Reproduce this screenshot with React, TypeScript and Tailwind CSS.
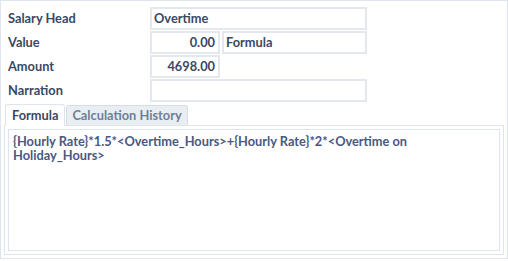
export default function App() {
  const rows = [
    { label: 'Salary Head' },
    { label: 'Value' },
    { label: 'Amount' },
    { label: 'Narration' },
  ];

  return (
    <div
      className="w-[508px] h-[259px] border border-[#dfe5ec] bg-white px-[3px] pt-[6px] text-[12.8px] text-[#3a4864]"
      style={{ fontFamily: 'Lato, "Noto Sans", sans-serif' }}
    >
      {/* Form */}
      <div className="flex flex-col gap-px pl-[4px]">
        <div className="flex h-[23px] items-center">
          <div className="w-[142px] font-bold">{rows[0].label}</div>
          <div className="flex h-[23px] w-[217px] items-center border-2 border-[#e3e8ee] px-[2px] font-bold">Overtime</div>
        </div>
        <div className="flex h-[23px] items-center">
          <div className="w-[142px] font-bold">{rows[1].label}</div>
          <div className="flex h-[23px] w-[70px] items-center justify-end border-2 border-[#e3e8ee] px-[3px] font-bold">0.00</div>
          <div className="ml-[2px] flex h-[23px] w-[145px] items-center border-2 border-[#e3e8ee] px-[2px] font-bold">Formula</div>
        </div>
        <div className="flex h-[23px] items-center">
          <div className="w-[142px] font-bold">{rows[2].label}</div>
          <div className="flex h-[23px] w-[70px] items-center justify-end border-2 border-[#e3e8ee] px-[3px] font-bold">4698.00</div>
        </div>
        <div className="flex h-[23px] items-center">
          <div className="w-[142px] font-bold">{rows[3].label}</div>
          <div className="h-[23px] w-[217px] border-2 border-[#e3e8ee]"></div>
        </div>
      </div>

      {/* Tabs */}
      <div className="mt-[2px]">
        <div className="flex items-end pl-[1px]">
          <div className="relative z-10 -mb-px flex h-[22px] items-center rounded-t-[3px] border border-b-0 border-[#dfe5ec] bg-white px-[6px] font-bold">
            Formula
          </div>
          <div className="ml-[1px] flex h-[20px] items-center rounded-t-[3px] border border-b-0 border-[#d6dde6] bg-[#e9eef3] px-[5px] font-bold text-[#6e7f98]">
            Calculation History
          </div>
        </div>
        <div className="border border-[#dfe5ec] p-[3px]">
          <div className="h-[122px] border border-[#dfe5ec] px-[4px] pt-[4px] font-bold leading-[14px] text-[#4a5882]">
            {'{Hourly Rate}*1.5*<Overtime_Hours>+{Hourly Rate}*2*<Overtime on Holiday_Hours>'}
          </div>
        </div>
      </div>
    </div>
  );
}
